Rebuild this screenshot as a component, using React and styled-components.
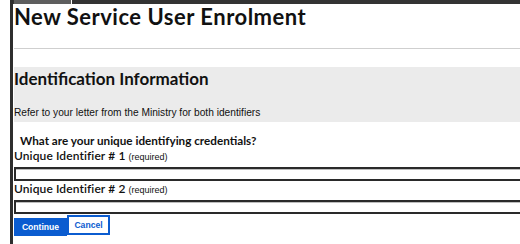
import React from "react";
import styled, { createGlobalStyle } from "styled-components";

const Global = createGlobalStyle`
  html, body { margin: 0; padding: 0; background: #fff; }
  body { overflow: hidden; width: 520px; height: 244px; }
`;

const Page = styled.div`
  margin-left: 10px;
  border-left: 3px solid #2e2e2e;
  height: 244px;
  overflow: hidden;
  box-sizing: border-box;
`;

const TopStrip = styled.div`
  display: flex;
  height: 4px;
  background: #333;
`;

const Tab = styled.div`
  margin-left: 1px;
  width: 57px;
  background: #5e5e5e;
  border-right: 1px solid #fff;
`;

const Content = styled.div`
  padding-left: 1px;
`;

const Title = styled.h1`
  margin: 0;
  font-family: Lato, "Open Sans", sans-serif;
  font-weight: 700;
  font-size: 22px;
  letter-spacing: 0.5px;
  line-height: 26px;
  color: #111;
`;

const Rule = styled.hr`
  margin: 18px 0 0;
  border: 0;
  height: 1px;
  background: #cfcfcf;
`;

const Band = styled.section`
  margin-top: 18px;
  background: #ebebeb;
  padding: 0 0 2px;
`;

const SectionHeading = styled.h2`
  margin: 0;
  font-family: Lato, "Open Sans", sans-serif;
  font-weight: 700;
  font-size: 17px;
  line-height: 24px;
  color: #111;
`;

const Note = styled.p`
  margin: 15px 0 0;
  font-family: "Liberation Sans", Arial, sans-serif;
  font-size: 10.2px;
  line-height: 14px;
  color: #111;
`;

const Form = styled.form`
  margin-top: 10px;
  display: flex;
  flex-direction: column;
`;

const Question = styled.div`
  margin-left: 6px;
  font-family: Lato, "Open Sans", sans-serif;
  font-weight: 700;
  font-size: 11.7px;
  line-height: 16px;
  color: #111;
`;

const Label = styled.label`
  display: block;
  font-family: Lato, "Open Sans", sans-serif;
  font-weight: 600;
  font-size: 12px;
  letter-spacing: 0.1px;
  line-height: 16px;
  color: #111;
`;

const Hint = styled.span`
  font-family: "Liberation Sans", Arial, sans-serif;
  font-weight: 400;
  font-size: 9px;
  letter-spacing: 0;
`;

const Input = styled.input`
  display: block;
  box-sizing: border-box;
  margin: 2px 0 0;
  width: 560px;
  height: 14px;
  padding: 0;
  border: 2px solid #2a2a2a;
  box-shadow: inset 0 1px 0 #bdbdbd;
  background: #fff;
  outline: none;
`;

const Actions = styled.div`
  display: flex;
  align-items: flex-start;
  margin-top: 1px;
`;

const Button = styled.button`
  box-sizing: border-box;
  font-family: "Liberation Sans", Arial, sans-serif;
  font-weight: 700;
  font-size: 8.6px;
  cursor: pointer;
  padding: 0;
  margin: ${(p) => (p.$primary ? "3px 0 0" : "0")};
  width: ${(p) => (p.$primary ? "53px" : "43px")};
  height: ${(p) => (p.$primary ? "18px" : "20px")};
  background: ${(p) => (p.$primary ? "#0b5cd0" : "#fff")};
  color: ${(p) => (p.$primary ? "#fff" : "#0b5cd0")};
  border: ${(p) => (p.$primary ? "0" : "2px solid #0b5cd0")};
  border-radius: 0;
`;

export default function App() {
  return (
    <>
      <Global />
      <Page>
        <TopStrip>
          <Tab />
        </TopStrip>
        <Content>
          <Title>New Service User Enrolment</Title>
          <Rule />
          <Band>
            <SectionHeading>Identification Information</SectionHeading>
            <Note>Refer to your letter from the Ministry for both identifiers</Note>
          </Band>
          <Form onSubmit={(e) => e.preventDefault()}>
            <Question>What are your unique identifying credentials?</Question>
            <Label htmlFor="uid1">
              Unique Identifier # 1 <Hint>(required)</Hint>
            </Label>
            <Input id="uid1" type="text" />
            <Label htmlFor="uid2">
              Unique Identifier # 2 <Hint>(required)</Hint>
            </Label>
            <Input id="uid2" type="text" />
            <Actions>
              <Button type="submit" $primary>Continue</Button>
              <Button type="button">Cancel</Button>
            </Actions>
          </Form>
        </Content>
      </Page>
    </>
  );
}
